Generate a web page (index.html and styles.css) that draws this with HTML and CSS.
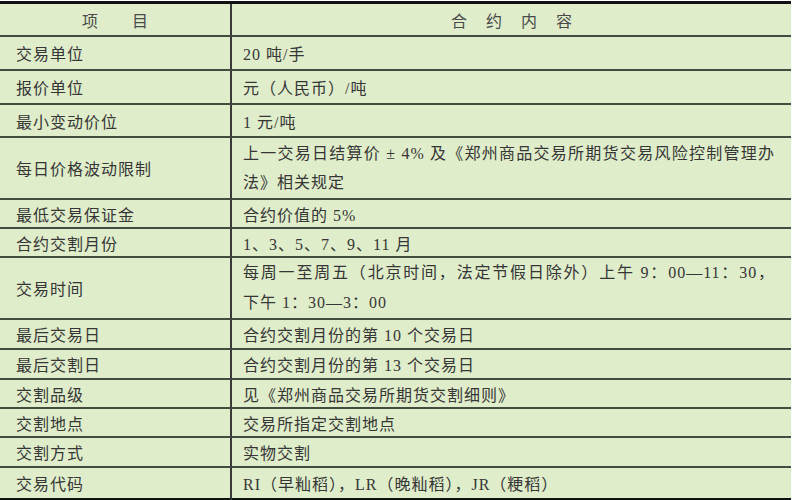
FILE: index.html
```html
<!DOCTYPE html>
<html lang="zh-CN">
<head>
<meta charset="utf-8">
<title>合约内容</title>
<link rel="stylesheet" href="styles.css">
</head>
<body>
<table class="spec">
  <tr class="head h33">
    <td class="key hd">项目</td>
    <td class="val hd hd-r">合约内容</td>
  </tr>
  <tr class="h34"><td class="key">交易单位</td><td class="val">20 吨/手</td></tr>
  <tr class="h34"><td class="key">报价单位</td><td class="val">元（人民币）/吨</td></tr>
  <tr class="h33"><td class="key">最小变动价位</td><td class="val">1 元/吨</td></tr>
  <tr class="h62"><td class="key">每日价格波动限制</td><td class="val two"><div class="ln full">上一交易日结算价 ± 4% 及《郑州商品交易所期货交易风险控制管理办</div><div class="ln">法》相关规定</div></td></tr>
  <tr class="h29"><td class="key">最低交易保证金</td><td class="val">合约价值的 5%</td></tr>
  <tr class="h29"><td class="key">合约交割月份</td><td class="val">1、3、5、7、9、11 月</td></tr>
  <tr class="h59"><td class="key">交易时间</td><td class="val two"><div class="ln full l30">每周一至周五（北京时间，法定节假日除外）上午 9：00—11：30，</div><div class="ln l30">下午 1：30—3：00</div></td></tr>
  <tr class="h30"><td class="key">最后交易日</td><td class="val">合约交割月份的第 10 个交易日</td></tr>
  <tr class="h30"><td class="key">最后交割日</td><td class="val">合约交割月份的第 13 个交易日</td></tr>
  <tr class="h29"><td class="key">交割品级</td><td class="val">见《郑州商品交易所期货交割细则》</td></tr>
  <tr class="h29"><td class="key">交割地点</td><td class="val">交易所指定交割地点</td></tr>
  <tr class="h30"><td class="key">交割方式</td><td class="val">实物交割</td></tr>
  <tr class="h35 last"><td class="key">交易代码</td><td class="val">RI（早籼稻），LR（晚籼稻），JR（粳稻）</td></tr>
</table>
</body>
</html>
```

FILE: styles.css
```css
html, body {
  margin: 0;
  padding: 0;
  background: #ffffff;
}
body {
  padding-top: 1px;
  font-family: "Liberation Serif", "Noto Sans CJK SC", serif;
  font-size: 16px;
  color: #363636;
}
.spec {
  width: 791px;
  border-collapse: separate;
  border-spacing: 0;
  background: #dfedca;
  border-top: 3px solid #111111;
  table-layout: fixed;
}
.spec td {
  box-sizing: border-box;
  padding: 0;
  border-bottom: 2px solid #434d3f;
  vertical-align: middle;
  letter-spacing: 1px;
  white-space: nowrap;
}
.spec tr.last td {
  border-bottom: 5px solid #111111;
}
.key {
  width: 232px;
  padding-left: 16px !important;
  border-right: 2px solid #3a3a3a;
}
.val {
  padding-left: 11px !important;
  padding-right: 16px !important;
}
.hd {
  text-align: center;
  letter-spacing: 19px !important;
  color: #4a4a4a;
  padding-left: 19px !important;
}
.hd.key {
  letter-spacing: 34px !important;
  padding-left: 34px !important;
}
.hd-r {
  padding-right: 0 !important;
}
.ln {
  line-height: 29px;
}
.ln.l30 {
  line-height: 30px;
}
.ln.full {
  text-align: justify;
  text-align-last: justify;
}
.h29 td { height: 29px; }
.h30 td { height: 30px; }
.h33 td { height: 33px; }
.h34 td { height: 34px; }
.h35 td { height: 35px; }
.h59 td { height: 59px; }
.h62 td { height: 62px; }
```
